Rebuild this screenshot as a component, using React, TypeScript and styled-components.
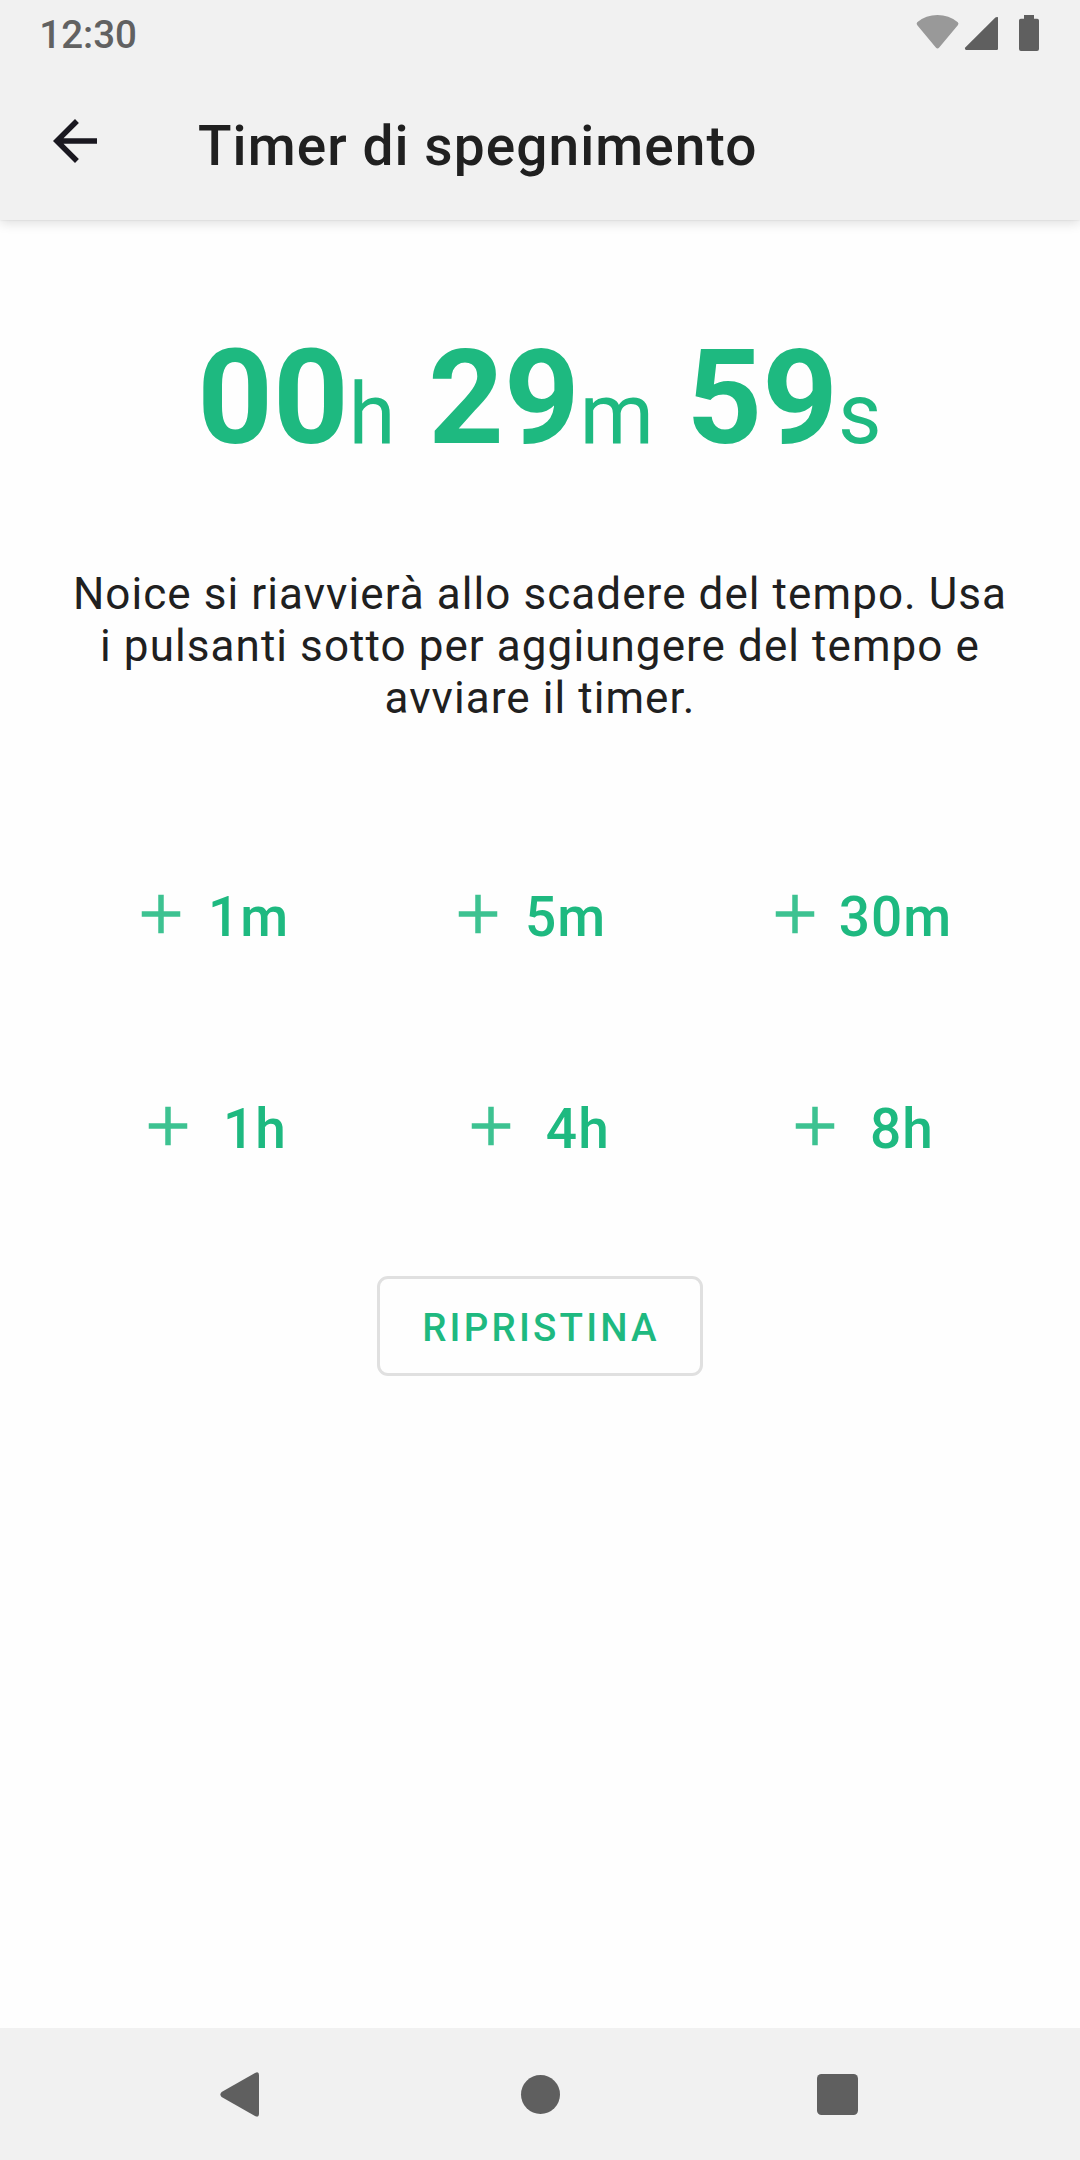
import React from "react";
import styled, { createGlobalStyle } from "styled-components";

const green = "#1eb980";
const barColor = "#f1f1f1";
const systemIcon = "#5f5f5f";

const GlobalStyle = createGlobalStyle`
  *, *::before, *::after { box-sizing: border-box; }
  body { margin: 0; background: #fefefe; }
`;

const Screen = styled.div`
  display: flex;
  flex-direction: column;
  width: 1080px;
  height: 2160px;
  overflow: hidden;
  background: #fefefe;
  color: #202020;
  font-family: Roboto, "Noto Sans", sans-serif;
`;

const Header = styled.header`
  height: 220px;
  flex: none;
  background: ${barColor};
  box-shadow: 0 0 2px rgba(0, 0, 0, 0.1), 0 3px 11px rgba(0, 0, 0, 0.13);
`;

const StatusBar = styled.div`
  display: flex;
  height: 66px;
  padding: 0 41px 0 39.3px;
  justify-content: space-between;
`;

const Clock = styled.span`
  padding-top: 2px;
  color: #616161;
  font-size: 38.5px;
  font-weight: 500;
  line-height: 66px;
`;

const StatusIcons = styled.svg`
  display: block;
  width: 123px;
  height: 66px;
`;

const AppBar = styled.div`
  display: flex;
  height: 154px;
  padding-left: 42px;
`;

const BackButton = styled.button`
  display: flex;
  width: 66px;
  height: 66px;
  margin: 42px 90px 0 0;
  padding: 0;
  border: 0;
  background: none;
  color: #1a1820;
`;

const Title = styled.h1`
  margin: 0;
  padding-top: 6px;
  font-size: 55px;
  font-weight: 500;
  letter-spacing: 1.07px;
  line-height: 148px;
  white-space: nowrap;
`;

const Content = styled.main`
  display: flex;
  flex: 1;
  flex-direction: column;
  align-items: center;
`;

const Countdown = styled.div`
  display: flex;
  gap: 32.8px;
  align-items: baseline;
  margin-top: 101px;
  height: 154px;
  padding-right: 1px;
  color: ${green};
  font-size: 132px;
  font-weight: 700;
  line-height: 154px;
`;

const Unit = styled.span`
  font-size: 84.5px;
  font-weight: 400;
`;

const Description = styled.p`
  width: 948px;
  margin: 93px 0 0;
  font-size: 44px;
  letter-spacing: 1.07px;
  line-height: 52px;
  text-align: center;
`;

const AddRow = styled.div<{ $top: number; $left: number; $columns: string }>`
  display: grid;
  grid-template-columns: ${(p) => p.$columns};
  align-self: flex-start;
  height: 66px;
  margin: ${(p) => p.$top}px 0 0 ${(p) => p.$left}px;
`;

const AddButton = styled.button<{ $gap: number }>`
  display: flex;
  gap: ${(p) => p.$gap}px;
  align-items: flex-start;
  padding: 0;
  border: 0;
  background: none;
  color: ${green};
  font: 500 55px/72px Roboto, "Noto Sans", sans-serif;
  letter-spacing: 1.07px;
`;

const Icon = styled.svg<{ $opacity?: number }>`
  display: block;
  flex: none;
  width: 66px;
  height: 66px;
  fill: currentColor;
  opacity: ${(p) => p.$opacity ?? 1};
`;

const ResetButton = styled.button`
  width: 326px;
  height: 100px;
  margin-top: 117px;
  padding: 4px 0 0 2px;
  border: 3px solid #e0e0e0;
  border-radius: 11px;
  background: transparent;
  color: ${green};
  font: 500 38.5px/90px Roboto, "Noto Sans", sans-serif;
  letter-spacing: 3.2px;
`;

const NavBar = styled.nav`
  display: flex;
  flex: none;
  align-items: center;
  justify-content: space-between;
  height: 132px;
  padding: 0 221px 0 219px;
  background: ${barColor};
`;

const NavIcon = styled.svg`
  display: block;
  width: 42px;
  height: 48px;
  fill: ${systemIcon};
`;

const times = [
  ["00", "h"],
  ["29", "m"],
  ["59", "s"],
];

const rows = [
  { top: 157, left: 128, columns: "317px 317px 317px", items: [["1m", 14], ["5m", 14], ["30m", 10.7]] },
  { top: 146, left: 135, columns: "323px 324px 323px", items: [["1h", 22], ["4h", 21.8], ["8h", 22]] },
] as const;

export default function App() {
  return (
    <Screen>
      <GlobalStyle />
      <Header>
        <StatusBar>
          <Clock>12:30</Clock>
          <StatusIcons viewBox="916 0 123 66" fill={systemIcon}>
            <path
              d="M917.2 22.2Q916 23.8 917.3 25.3L935.8 47.4Q937.5 49.4 939.2 47.4L957.8 25.3Q959.2 23.6 957.8 22.2Q948.8 15.1 937.5 15.1Q926 15.1 917.2 22.2Z"
              fill="#999"
            />
            <path d="M965.5 47.3L995.4 17.6Q996.6 16.7 998 17.2V48.8Q998 50 996.8 50H966.2Q964 49.5 965.5 47.3Z" />
            <path d="M1024 15H1034V18.7H1037.2Q1039 18.7 1039 20.5V49Q1039 51 1037 51H1021Q1019 51 1019 49V20.5Q1019 18.7 1020.8 18.7H1024Z" />
          </StatusIcons>
        </StatusBar>
        <AppBar>
          <BackButton aria-label="Indietro">
            <Icon viewBox="0 0 24 24">
              <path d="M20 11H7.83l5.59-5.59L12 4l-8 8 8 8 1.41-1.41L7.83 13H20v-2z" />
            </Icon>
          </BackButton>
          <Title>Timer di spegnimento</Title>
        </AppBar>
      </Header>
      <Content>
        <Countdown>
          {times.map(([value, unit]) => (
            <span key={unit}>
              {value}
              <Unit>{unit}</Unit>
            </span>
          ))}
        </Countdown>
        <Description>
          Noice si riavvierà allo scadere del tempo. Usa i pulsanti sotto per aggiungere del tempo e
          avviare il timer.
        </Description>
        {rows.map((row) => (
          <AddRow key={row.top} $top={row.top} $left={row.left} $columns={row.columns}>
            {row.items.map(([label, gap]) => (
              <AddButton key={label} $gap={gap}>
                <Icon viewBox="0 0 24 24" $opacity={0.86}>
                  <path d="M19 13h-6v6h-2v-6H5v-2h6V5h2v6h6v2z" />
                </Icon>
                {label}
              </AddButton>
            ))}
          </AddRow>
        ))}
        <ResetButton>RIPRISTINA</ResetButton>
      </Content>
      <NavBar>
        <NavIcon viewBox="219 2070 42 48">
          <path d="M221.6 2092L255 2073Q259 2071 259 2075V2113.5Q259 2118 255 2116L221.6 2097Q219.2 2094.5 221.6 2092Z" />
        </NavIcon>
        <NavIcon viewBox="518 2070 42 48">
          <circle cx="540.5" cy="2094.5" r="19.5" />
        </NavIcon>
        <NavIcon viewBox="817 2070 42 48">
          <rect x="817" y="2074" width="41" height="41" rx="4.5" />
        </NavIcon>
      </NavBar>
    </Screen>
  );
}
